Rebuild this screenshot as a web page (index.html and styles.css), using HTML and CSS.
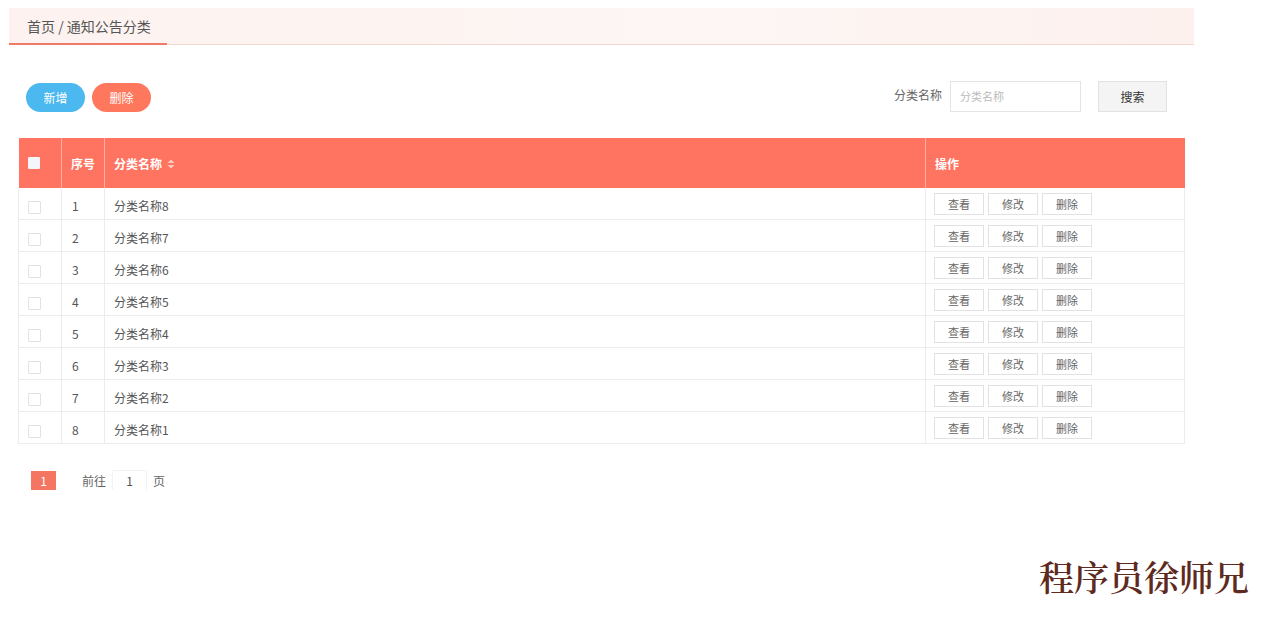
FILE: index.html
```html
<!DOCTYPE html>
<html lang="zh">
<head>
<meta charset="utf-8">
<title>通知公告分类</title>
<link rel="stylesheet" href="styles.css">
</head>
<body>
<div class="page">
  <div class="crumb">
    <span class="crumb-tab">首页 / 通知公告分类</span>
  </div>

  <div class="toolbar">
    <div class="actions">
      <button class="pill pill-blue">新增</button>
      <button class="pill pill-red">删除</button>
    </div>
    <div class="search">
      <span class="search-label">分类名称</span>
      <input class="search-input" placeholder="分类名称">
      <button class="search-btn">搜索</button>
    </div>
  </div>

  <table class="grid">
    <colgroup>
      <col class="c-check"><col class="c-no"><col class="c-name"><col class="c-op">
    </colgroup>
    <thead>
      <tr>
        <th><span class="hbox"></span></th>
        <th>序号</th>
        <th>分类名称 <span class="sort"><svg width="8" height="10" viewBox="0 0 8 10"><path d="M4 0.5 L7.5 4 H0.5 Z M4 9.5 L7.5 6 H0.5 Z" fill="#ffc9bf"/></svg></span></th>
        <th>操作</th>
      </tr>
    </thead>
    <tbody>
      <tr><td><span class="box"></span></td><td>1</td><td>分类名称8</td><td class="ops"><span class="op">查看</span><span class="op">修改</span><span class="op">删除</span></td></tr>
      <tr><td><span class="box"></span></td><td>2</td><td>分类名称7</td><td class="ops"><span class="op">查看</span><span class="op">修改</span><span class="op">删除</span></td></tr>
      <tr><td><span class="box"></span></td><td>3</td><td>分类名称6</td><td class="ops"><span class="op">查看</span><span class="op">修改</span><span class="op">删除</span></td></tr>
      <tr><td><span class="box"></span></td><td>4</td><td>分类名称5</td><td class="ops"><span class="op">查看</span><span class="op">修改</span><span class="op">删除</span></td></tr>
      <tr><td><span class="box"></span></td><td>5</td><td>分类名称4</td><td class="ops"><span class="op">查看</span><span class="op">修改</span><span class="op">删除</span></td></tr>
      <tr><td><span class="box"></span></td><td>6</td><td>分类名称3</td><td class="ops"><span class="op">查看</span><span class="op">修改</span><span class="op">删除</span></td></tr>
      <tr><td><span class="box"></span></td><td>7</td><td>分类名称2</td><td class="ops"><span class="op">查看</span><span class="op">修改</span><span class="op">删除</span></td></tr>
      <tr><td><span class="box"></span></td><td>8</td><td>分类名称1</td><td class="ops"><span class="op">查看</span><span class="op">修改</span><span class="op">删除</span></td></tr>
    </tbody>
  </table>

  <div class="pager">
    <span class="pg-cur">1</span>
    <span class="pg-text">前往</span>
    <span class="pg-input">1</span>
    <span class="pg-text">页</span>
  </div>
</div>
<div class="mark">程序员徐师兄</div>
</body>
</html>
```

FILE: styles.css
```css
html, body {
  margin: 0;
  padding: 0;
  background: #fff;
  font-family: "Noto Sans CJK SC", "Noto Sans", "Liberation Sans", sans-serif;
  color: #555;
}
.page {
  width: 1185px;
  padding: 8px 0 0 9px;
}
.crumb {
  height: 36px;
  background: linear-gradient(to right, #fdf2ef, #fdf6f4 60%, #fdf1ee);
  border-bottom: 1px solid #f4d6d0;
  display: flex;
  align-items: stretch;
}
.crumb-tab {
  width: 140px;
  padding-left: 18px;
  border-bottom: 2px solid #ef7a68;
  margin-bottom: -1px;
  font-size: 14px;
  color: #555;
  line-height: 36px;
}
.toolbar {
  display: flex;
  justify-content: space-between;
  align-items: center;
  margin-top: 35px;
  padding: 0 27px 0 17px;
  height: 32px;
}
.actions { display: flex; gap: 7px; padding-top: 2px; }
.pill {
  width: 59px;
  height: 29px;
  border: 0;
  border-radius: 15px;
  color: #fff;
  font-family: inherit;
  font-size: 12px;
  padding: 0;
}
.pill-blue { background: #4bb8f0; }
.pill-red { background: #ff785e; }
.search { display: flex; align-items: center; }
.search-label { font-size: 12px; color: #666; margin-right: 8px; margin-top: -3px; }
.search-input {
  width: 120px;
  height: 29px;
  border: 1px solid #e4e4e4;
  padding: 0 0 0 9px;
  font-family: inherit;
  font-size: 11px;
  box-sizing: content-box;
  outline: none;
}
.search-input::placeholder { color: #bbb; }
.search-btn {
  width: 69px;
  height: 31px;
  margin-left: 17px;
  background: #f4f4f4;
  border: 1px solid #e2e2e2;
  font-family: inherit;
  font-size: 12px;
  color: #333;
  padding: 0;
}
.grid {
  margin-top: 26px;
  margin-left: 9px;
  width: 1166px;
  border-collapse: collapse;
  table-layout: fixed;
  font-size: 12px;
}
.c-check { width: 43px; }
.c-no { width: 43px; }
.c-name { width: 821px; }
.c-op { width: 259px; }
.grid th {
  height: 50px;
  background: #ff7461;
  color: #fff;
  font-weight: bold;
  text-align: left;
  padding: 0 0 0 9px;
  border-left: 1px solid #ffb0a4;
  font-size: 12px;
}
.grid th:first-child { border-left: 0; }
.grid td {
  height: 28px;
  padding: 3px 0 0 9px;
  border: 1px solid #ececec;
  border-top: 0;
  color: #555;
  font-size: 12px;
}
.grid td:nth-child(2) { padding-left: 10px; }
.hbox {
  display: inline-block;
  width: 12px;
  height: 12px;
  background: #f4f6fb;
  border-radius: 1px;
  vertical-align: middle;
  margin-top: -4px;
}
.box {
  display: inline-block;
  width: 11px;
  height: 11px;
  border: 1px solid #e2e2e2;
  border-radius: 1px;
  vertical-align: middle;
}
.sort { display: inline-block; vertical-align: middle; margin-left: 2px; margin-top: -3px; }
.sort svg { display: block; }
.grid td.ops { padding: 0 0 0 8px; }
.op {
  display: inline-block;
  width: 48px;
  height: 20px;
  line-height: 20px;
  border: 1px solid #e2e2e2;
  text-align: center;
  font-size: 11px;
  color: #666;
  margin-right: 4px;
  vertical-align: middle;
}
.pager {
  display: flex;
  align-items: center;
  margin-top: 26px;
  margin-left: 22px;
  height: 20px;
  font-size: 12px;
}
.pg-cur {
  width: 25px;
  height: 19px;
  line-height: 19px;
  background: #f47662;
  color: #fff;
  text-align: center;
  font-size: 12px;
}
.pg-text { color: #666; margin-left: 26px; }
.pg-input {
  width: 33px;
  height: 19px;
  line-height: 19px;
  text-align: center;
  margin-left: 6px;
  color: #555;
  border: 1px solid #f3f3f3;
  border-radius: 2px;
}
.pg-input + .pg-text { margin-left: 6px; }
.mark {
  position: absolute;
  left: 1039px;
  top: 551px;
  font-family: "Noto Serif CJK SC", "Noto Sans CJK SC", serif;
  font-size: 35px;
  font-weight: 600;
  color: #5e2a20;
}
```
